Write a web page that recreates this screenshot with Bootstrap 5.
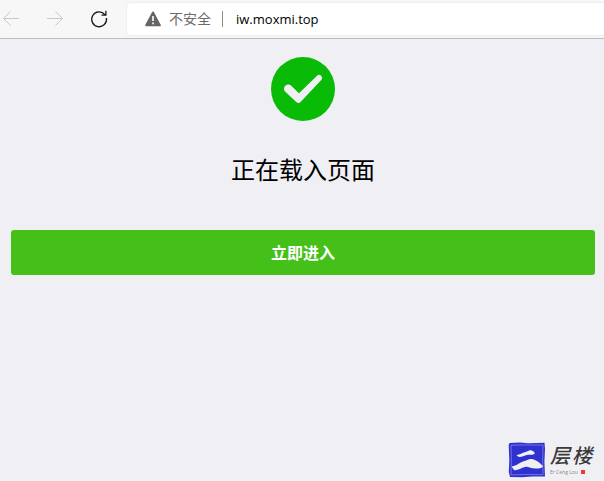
<!DOCTYPE html>
<html lang="zh-CN">
<head>
<meta charset="utf-8">
<meta name="viewport" content="width=device-width, initial-scale=1">
<title>正在载入页面</title>
<link href="https://cdn.jsdelivr.net/npm/bootstrap@5.3.0/dist/css/bootstrap.min.css" rel="stylesheet">
<style>
body { background: #efeff4; color: #000; font-family: "Open Sans", "Noto Sans CJK SC", sans-serif; }
.toolbar { background: #f7f7f7; border-bottom: 1px solid #bcbcbc; height: 39px; padding-left: 2px; }
.tool-btn { width: 18px; height: 18px; color: #1b1b1b; }
.tool-btn:disabled { color: #c8c8c8; opacity: 1; }
.tool-btn svg, .brand-seal, .state-icon { display: block; }
.nav-tools { gap: 26px; }
.address { height: 32px; margin-left: 19px; padding-left: 18px; background: #fff; border-radius: 4px 0 0 4px; box-shadow: 0 0 2px rgba(0, 0, 0, .12); }
.security { color: #6b6b6b; font-size: 14px; line-height: 20px; }
.divider { width: 1px; height: 16px; background: #8a8a8a; margin: 0 13px 0 11px; }
.url-field { font-size: 13px; line-height: 20px; color: #000; outline: 0; min-width: 0; }
.page-main { padding: 18px 9px 0 11px; }
.state-title { font-size: 24px; line-height: 36px; margin: 31px 0 42px; }
.enter-btn, .enter-btn:hover { background: #44c018; color: #fff; border: 0; border-radius: 3px; height: 45px; font-size: 16px; line-height: 24px; font-weight: 700; }
.brand { gap: 4px; padding: 0 12px 3px 0; color: #3a3a3a; }
.brand-name { font-size: 20px; line-height: 24px; font-style: italic; font-weight: 500; gap: 2px; }
.brand-latin { font-size: 5px; line-height: 8px; color: #888; gap: 3px; }
.brand-dot { width: 4px; height: 4px; background: #f03535; }
</style>
</head>
<body class="min-vh-100 d-flex flex-column">
<header class="toolbar d-flex align-items-center flex-shrink-0">
  <nav class="nav-tools d-flex" aria-label="浏览">
    <button class="tool-btn btn p-0 border-0" type="button" disabled aria-label="后退"><svg width="18" height="18" viewBox="0 0 18 18" fill="none" stroke="currentColor"><path d="M17 8.500H1.500M8.500 1.500l-7 7 7 7"/></svg></button>
    <button class="tool-btn btn p-0 border-0" type="button" disabled aria-label="前进"><svg width="18" height="18" viewBox="0 0 18 18" fill="none" stroke="currentColor"><path d="M1 8.500h15.500M9.500 1.500l7 7-7 7"/></svg></button>
    <button class="tool-btn btn p-0 border-0" type="button" aria-label="刷新"><svg width="18" height="18" viewBox="0 0 18 18" fill="none" stroke="currentColor" stroke-width="1.300"><path d="M14.900 4.700A7.400 7.400 0 1 0 16.400 8M15.900 .800v4.400h-4.400"/></svg></button>
  </nav>
  <div class="address d-flex align-items-center flex-grow-1">
    <svg class="me-2" width="16" height="16" viewBox="0 0 16 16" aria-hidden="true"><path d="M8 1.500 14.800 14.300H1.200Z" fill="#666" stroke="#666" stroke-width="2" stroke-linejoin="round"/><path d="M8 5v5M8 11.500v1.700" stroke="#fff" stroke-width="1.600"/></svg>
    <span class="security text-nowrap">不安全</span>
    <span class="divider"></span>
    <input class="url-field flex-grow-1 border-0 bg-transparent p-0" type="text" value="iw.moxmi.top" aria-label="地址">
  </div>
</header>
<main class="page-main text-center flex-grow-1">
  <svg class="state-icon mx-auto" width="64" height="64" viewBox="0 0 64 64" role="img" aria-label="成功"><circle cx="32" cy="32" r="32" fill="#09bb07"/><path d="M13.800 34.200A4.300 4.300 0 0 1 19.700 28.200L28 36.200 46.300 18.500A3 3 0 0 1 50.500 22.700L30 44.500Q27.500 47.500 24.700 44.600Z" fill="#efeff4"/></svg>
  <h1 class="state-title fw-normal">正在载入页面</h1>
  <button class="enter-btn btn w-100 p-0" type="button">立即进入</button>
</main>
<footer class="brand d-flex justify-content-end align-items-center">
  <svg class="brand-seal" width="38" height="36" viewBox="0 0 38 36" role="img" aria-label="二层楼">
    <path d="M1.500 1 12 .600 20 1.200 36.500 .800 37 7 36.400 20 37 34.500 24 34.500 14 35.200 2 35 .800 30 1.300 18 .700 3Z" fill="#3032d0"/>
    <path d="M3 3.300 15 2.900 35 3.100 34.700 18 35 32.700 20 32.500 3 32.900 3.300 18Z" fill="none" stroke="#9c9de8" stroke-width=".6"/>
    <path d="M8.500 13C12 12.700 14 10.700 17.500 10 20 9.500 20.500 7.900 23 8.200 25.500 8.900 27.300 10.500 26.500 12 24.500 13.200 22 12.200 19 13 16 14 12 15.500 10 14.600Z" fill="#efeff4"/>
    <path d="M3.500 24.500C8 24 11 21 15 19.500 19 18.200 21 16.400 24 17 28.500 18 33 21.500 35 24.500 33.500 27 29 26.600 25 26.300 22 26 20 24.300 17 25 13 26 9 29 6 28Z" fill="#efeff4"/>
  </svg>
  <div>
    <div class="brand-name d-flex"><span>层</span><span>楼</span></div>
    <div class="brand-latin d-flex align-items-center"><span>Er Ceng Lou</span><span class="brand-dot"></span></div>
  </div>
</footer>
<script src="https://cdn.jsdelivr.net/npm/bootstrap@5.3.0/dist/js/bootstrap.bundle.min.js"></script>
</body>
</html>
